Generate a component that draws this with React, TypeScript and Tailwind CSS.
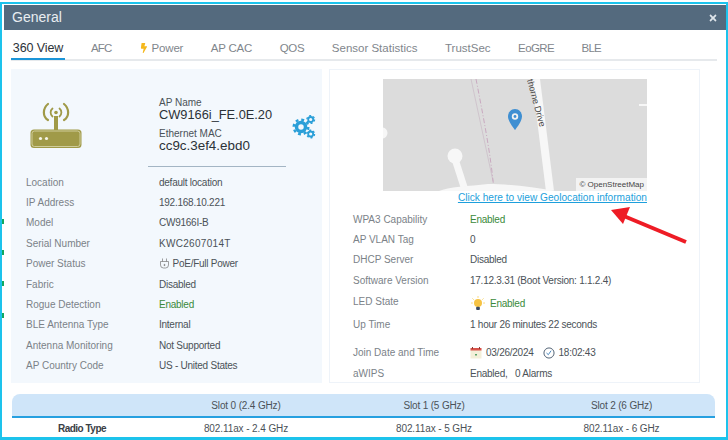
import { FaBolt, FaTimes } from "react-icons/fa";

const tabs = [
    { name: "AFC", track: "tracking-[-0.8px]" },
    { name: "Power", track: "tracking-[-0.2px]" },
    { name: "AP CAC", track: "tracking-[-0.2px]" },
    { name: "QOS", track: "tracking-[-0.3px]" },
    { name: "Sensor Statistics", track: "" },
    { name: "TrustSec", track: "" },
    { name: "EoGRE", track: "tracking-[-0.6px]" },
    { name: "BLE", track: "tracking-[-0.8px]" },
];

const leftRows = [
    ["Location", "default location"],
    ["IP Address", "192.168.10.221"],
    ["Model", "CW9166I-B"],
];

function ApIcon() {
    return (
        <svg width="54" height="48" viewBox="0 0 54 48" fill="none">
            <path d="M19 3c-5.500 4.500-5.500 12.500 0 16M35 3c5.500 4.500 5.500 12.500 0 16" stroke="#a09a48" strokeWidth="2.2" strokeLinecap="round" />
            <path d="M23.500 7.500c-2.500 2-2.500 6 0 8M30.500 7.500c2.500 2 2.500 6 0 8" stroke="#a09a48" strokeWidth="1.800" strokeLinecap="round" />
            <circle cx="27" cy="11.500" r="1.800" fill="#a09a48" />
            <rect x="25" y="15" width="4" height="14" fill="#a09a48" />
            <rect x="1.500" y="28.500" width="51" height="18.500" rx="3.500" fill="#a09a48" />
            <rect x="3" y="30" width="48" height="15.500" rx="2.500" fill="#a09a48" stroke="#d5d2a4" strokeWidth="0.900" />
            <circle cx="11.500" cy="37.500" r="1.600" fill="#f5f5e8" />
            <circle cx="17.500" cy="37.500" r="1.600" fill="#f5f5e8" />
        </svg>
    );
}

function GearsIcon() {
    return (
        <svg width="24" height="24" viewBox="0 0 24 24" fill="none" stroke="#2a9fd8">
            <circle cx="9" cy="12" r="4.500" strokeWidth="3.500" />
            <circle cx="9" cy="12" r="7.300" strokeWidth="2.400" strokeDasharray="2.870 2.870" />
            <circle cx="18.700" cy="4.500" r="2.500" strokeWidth="1.800" />
            <circle cx="18.700" cy="4.500" r="3.800" strokeWidth="1.400" strokeDasharray="2 1.980" />
            <circle cx="18.700" cy="19" r="2.500" strokeWidth="1.800" />
            <circle cx="18.700" cy="19" r="3.800" strokeWidth="1.400" strokeDasharray="2 1.980" />
        </svg>
    );
}

function PlugIcon() {
    return (
        <svg width="9" height="11" viewBox="0 0 9 11" fill="none" stroke="#777" strokeWidth="0.700" className="ml-[1px]">
            <path d="M2.500 0.500v3M6.500 0.500v3M0.500 3.500h8V7a3 3 0 0 1-3 3h-2a3 3 0 0 1-3-3z" />
            <circle cx="4.500" cy="7" r="0.600" fill="#777" />
        </svg>
    );
}

function BulbIcon() {
    return (
        <svg width="14" height="15" viewBox="0 0 15 16" fill="none">
            <path d="M7.500 0v2M1.500 2.500 3 4M13.500 2.500 12 4M0 7.500h2M13 7.500h2" stroke="#f7d774" strokeWidth="1" />
            <circle cx="7.500" cy="7.500" r="4.300" fill="#f6c344" />
            <rect x="5.500" y="11.500" width="4" height="3.500" rx="1" fill="#3a4a63" />
        </svg>
    );
}

function CalendarIcon() {
    return (
        <svg width="12" height="12" viewBox="0 0 12 12">
            <rect x="0.500" y="2.500" width="11" height="9" fill="#f3efd9" />
            <rect x="0.500" y="1" width="11" height="2.500" fill="#d9534a" />
            <rect x="2" y="0" width="1" height="2" fill="#8a3a34" />
            <rect x="9" y="0" width="1" height="2" fill="#8a3a34" />
            <rect x="5" y="7" width="2" height="1.500" fill="#5aa469" />
        </svg>
    );
}

function ClockIcon() {
    return (
        <svg width="12" height="12" viewBox="0 0 13 13" fill="none" stroke="#47586b" strokeWidth="1">
            <circle cx="6.500" cy="6.500" r="5.500" />
            <path d="M3.800 6.500 5.800 8.300 8.800 4" stroke="#3d7fb8" />
        </svg>
    );
}

function MapDrawing() {
    return (
        <svg width="264" height="112" viewBox="0 0 264 112" className="block">
            <rect width="264" height="112" fill="#dcdcdc" />
            <path d="M88 0 110 102" stroke="#cfc4cc" strokeWidth="1" fill="none" />
            <path d="M93 0C100 36 108 76 111 112" stroke="#c9a9c0" strokeWidth="1" strokeDasharray="5 2 1 2" fill="none" />
            <path d="M153 0 167 112" stroke="#f7f7f7" strokeWidth="8" fill="none" />
            <path d="M56 112C65 108 86 107 105 105C125 105 150 108 172 112Z" fill="#f7f7f7" />
            <circle cx="72" cy="77" r="7.500" fill="#f7f7f7" />
            <path d="M72 80 81 108" stroke="#f7f7f7" strokeWidth="7" fill="none" />
            <circle cx="-1" cy="54" r="5.500" fill="#f7f7f7" />
            <path d="M256 26h8" stroke="#f7f7f7" strokeWidth="2" />
            <text x="0" y="0" fontSize="9" fill="#444" transform="translate(144 1) rotate(75)" fontFamily="Liberation Sans, sans-serif">thorne Drive</text>
            <path d="M132 30c-4 0-7 3.500-7 7.500 0 5 7 13.500 7 13.500s7-8.500 7-13.500c0-4-3-7.500-7-7.500z" fill="#3f8fd2" />
            <circle cx="132" cy="37.500" r="3.200" fill="#f2f2f2" />
            <circle cx="132" cy="37.500" r="1.400" fill="#3f8fd2" />
        </svg>
    );
}

function LeftRow({ label, children }: { label: string; children: React.ReactNode }) {
    return (
        <div className="flex items-center h-[20.400px]">
            <span className="w-[133px] text-[#7b8288]">{label}</span>
            <div className="tracking-[-0.25px]">{children}</div>
        </div>
    );
}

function RightRow({ label, children, className }: { label: string; children: React.ReactNode; className?: string }) {
    return (
        <div className={`flex items-center ${className ?? "h-[20.400px]"}`}>
            <span className="w-[117px] text-[#7b8288]">{label}</span>
            <div className="tracking-[-0.25px]">{children}</div>
        </div>
    );
}

export default function App() {
    return (
        <div className="relative w-[728px] h-[440px] overflow-hidden bg-white pt-[2px] text-[10px] text-[#4b5258] [font-family:'Liberation_Sans',sans-serif]">
            <div className="h-[438px] border-2 border-b-[3px] border-[#1dc3ec] pt-[1px] pl-[2px] overflow-hidden">
                <div className="h-[25px] bg-[#546a7e] flex items-center justify-between pl-[8px] pr-[8px]">
                    <span className="text-[14px] text-[#e8edf1]">General</span>
                    <FaTimes className="text-[#dfe5ea] text-[10px]" />
                </div>

                <div className="ml-[7px] mr-[9px] mt-[8px] h-[23px] flex gap-[27.500px] text-[11.500px] text-[#7f868c] border-b-2 border-[#e6e9ec] leading-[21px]">
                    <span className="h-[22px] w-[54px] -mr-[1.500px] text-center text-[12.500px] tracking-[-0.1px] text-[#2b3238] border-b-[2.500px] border-[#1b95d8]">360 View</span>
                    {tabs.map((t) => (
                        <span key={t.name} className={`flex items-start gap-[2.500px] ${t.track}`}>
                            {t.name === "Power" && <FaBolt className="text-[#f5b81c] text-[10px] mt-[5px]" />}
                            {t.name}
                        </span>
                    ))}
                </div>

                <div className="flex mt-[8px] ml-[7px] gap-[7px] h-[314px]">
                    <div className="w-[311px] bg-[#f3f8fd]">
                        <div className="flex h-[103px]">
                            <div className="w-[148px] pl-[17.500px] pt-[32px] shrink-0"><ApIcon /></div>
                            <div className="w-[127px] relative">
                                <div className="pt-[28px] leading-[12px]">AP Name</div>
                                <div className="text-[12.800px] text-[#2b3238] leading-[14px] -mt-[1px]">CW9166i_FE.0E.20</div>
                                <div className="leading-[12px] mt-[6px]">Ethernet MAC</div>
                                <div className="text-[13.400px] text-[#2b3238] leading-[14px] -mt-[1px]">cc9c.3ef4.ebd0</div>
                                <div className="absolute left-[-11px] right-0 top-[97px] h-[1px] bg-[#a3b5c4]" />
                            </div>
                            <div className="ml-[6px] mt-[46px]"><GearsIcon /></div>
                        </div>
                        <div className="pl-[15px]">
                            {leftRows.map(([l, v]) => (
                                <LeftRow key={l} label={l}><span>{v}</span></LeftRow>
                            ))}
                            <LeftRow label="Serial Number"><span className="tracking-[0.3px]">KWC2607014T</span></LeftRow>
                            <LeftRow label="Power Status">
                                <span className="flex items-center gap-[3.500px]"><PlugIcon />PoE/Full Power</span>
                            </LeftRow>
                            <LeftRow label="Fabric"><span>Disabled</span></LeftRow>
                            <LeftRow label="Rogue Detection"><span className="text-[#3a8a3a]">Enabled</span></LeftRow>
                            <LeftRow label="BLE Antenna Type"><span>Internal</span></LeftRow>
                            <LeftRow label="Antenna Monitoring"><span>Not Supported</span></LeftRow>
                            <LeftRow label="AP Country Code"><span>US - United States</span></LeftRow>
                        </div>
                    </div>

                    <div className="w-[371px] border border-[#eef3f9]">
                        <div className="relative ml-[53px] mt-[9px] w-[264px] h-[112px]">
                            <MapDrawing />
                            <span className="absolute right-0 bottom-0 bg-[#f3f3f3] px-[3px] h-[13px] leading-[13px] text-[8px] text-[#444]">© OpenStreetMap</span>
                        </div>
                        <div className="w-[317px] text-right text-[10.150px] text-[#1d9fdc] underline leading-[14px]">Click here to view Geolocation information</div>
                        <div className="pl-[23px] mt-[4px]">
                            <RightRow label="WPA3 Capability"><span className="text-[#3a8a3a]">Enabled</span></RightRow>
                            <RightRow label="AP VLAN Tag"><span>0</span></RightRow>
                            <RightRow label="DHCP Server"><span>Disabled</span></RightRow>
                            <RightRow label="Software Version"><span>17.12.3.31 (Boot Version: 1.1.2.4)</span></RightRow>
                            <RightRow label="LED State" className="h-[22px]">
                                <span className="flex items-center gap-[5px] ml-[1px] mt-[3px] text-[#3a8a3a]"><BulbIcon />Enabled</span>
                            </RightRow>
                            <RightRow label="Up Time" className="h-[24px]"><span>1 hour 26 minutes 22 seconds</span></RightRow>
                            <RightRow label="Join Date and Time" className="h-[22px] mt-[5px]">
                                <span className="flex items-center gap-[4px]">
                                    <CalendarIcon />03/26/2024<span className="w-[1px]" /><ClockIcon />18:02:43
                                </span>
                            </RightRow>
                            <RightRow label="aWIPS"><span>Enabled,&nbsp;&nbsp;&nbsp;0 Alarms</span></RightRow>
                        </div>
                    </div>
                </div>

                <div className="ml-[8px] mt-[11px] w-[703px]">
                    <div className="grid grid-cols-[140px_188px_188px_187px] h-[24px] items-center text-center tracking-[-0.15px] bg-[#cfe5f9] rounded-t-[8px] border-b-[2px] border-[#27a0e0]">
                        <span />
                        <span>Slot 0 (2.4 GHz)</span>
                        <span>Slot 1 (5 GHz)</span>
                        <span>Slot 2 (6 GHz)</span>
                    </div>
                    <div className="grid grid-cols-[140px_188px_188px_187px] h-[20px] items-center text-center tracking-[-0.1px]">
                        <span className="font-bold text-[#3a4046] tracking-[-0.5px]">Radio Type</span>
                        <span>802.11ax - 2.4 GHz</span>
                        <span>802.11ax - 5 GHz</span>
                        <span>802.11ax - 6 GHz</span>
                    </div>
                </div>
            </div>

            <span className="absolute left-[2px] top-[219px] w-[1.500px] h-[5px] bg-[#13a860]" />
            <span className="absolute left-[2px] top-[250px] w-[1.500px] h-[5px] bg-[#13a860]" />
            <span className="absolute left-[2px] top-[281px] w-[1.500px] h-[5px] bg-[#13a860]" />
            <span className="absolute left-[2px] top-[313px] w-[1.500px] h-[5px] bg-[#13a860]" />

            <svg width="90" height="46" viewBox="0 0 90 46" className="absolute left-[605px] top-[203px]">
                <path d="M81 39 14 11" stroke="#ee1c25" strokeWidth="4" />
                <path d="M6 7 25 4 18 21Z" fill="#ee1c25" />
            </svg>
        </div>
    );
}
